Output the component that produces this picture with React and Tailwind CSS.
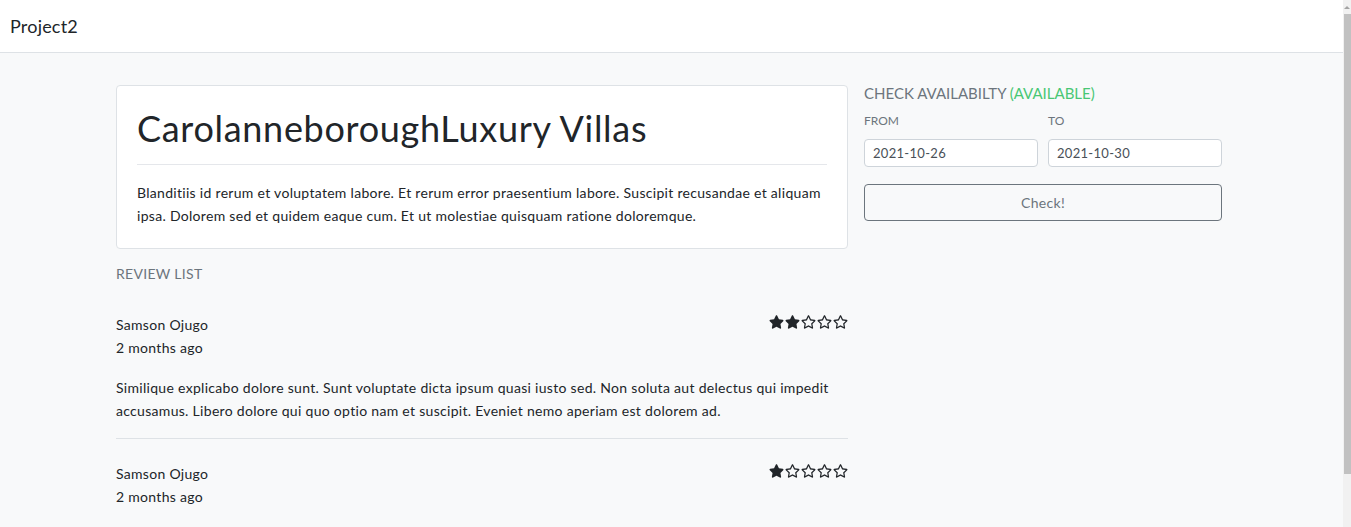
import { useState } from "react";

const reviews = [
  {
    name: "Samson Ojugo",
    time: "2 months ago",
    rating: 2,
    body: "Similique explicabo dolore sunt. Sunt voluptate dicta ipsum quasi iusto sed. Non soluta aut delectus qui impedit accusamus. Libero dolore qui quo optio nam et suscipit. Eveniet nemo aperiam est dolorem ad.",
  },
  {
    name: "Samson Ojugo",
    time: "2 months ago",
    rating: 1,
  },
];

function Star({ filled }) {
  return (
    <svg viewBox="0 0 576 512" className="w-[15px] h-[14px] text-[#212529]" fill="currentColor">
      {filled ? (
        <path d="M259.3 17.8L194 150.2 47.9 171.5c-26.2 3.8-36.7 36.1-17.7 54.6l105.7 103-25 145.5c-4.5 26.3 23.2 46 46.4 33.7L288 439.6l130.7 68.7c23.2 12.2 50.9-7.4 46.4-33.7l-25-145.5 105.7-103c19-18.5 8.5-50.8-17.7-54.6L382 150.2 316.7 17.8c-11.7-23.6-45.6-23.9-57.4 0z" />
      ) : (
        <path d="M528.1 171.5L382 150.2 316.7 17.8c-11.7-23.6-45.6-23.9-57.4 0L194 150.2 47.9 171.5c-26.2 3.8-36.7 36.1-17.7 54.6l105.7 103-25 145.5c-4.5 26.3 23.2 46 46.4 33.7L288 439.6l130.7 68.7c23.2 12.2 50.9-7.4 46.4-33.7l-25-145.5 105.7-103c19-18.5 8.5-50.8-17.7-54.6zM388.6 312.3l23.7 138.4L288 385.4l-124.3 65.3 23.7-138.4-100.6-98 139-20.2 62.2-126 62.2 126 139 20.2-100.6 98z" />
      )}
    </svg>
  );
}

function Review({ review, last }) {
  return (
    <div className={last ? "pt-[23px]" : "pt-[23px] pb-[16px] border-b border-[#dee2e6]"}>
      <div className="flex justify-between">
        <div>
          <div className="text-[14px] leading-[23px] tracking-[0.3px]">{review.name}</div>
          <div className="text-[14px] leading-[23px] tracking-[0.3px]">{review.time}</div>
        </div>
        <div className="flex gap-px mt-[2px]">
          {[1, 2, 3, 4, 5].map((i) => (
            <Star key={i} filled={i <= review.rating} />
          ))}
        </div>
      </div>
      {review.body && (
        <p className="mt-[17px] text-[14px] leading-[23px] tracking-[0.3px]">{review.body}</p>
      )}
    </div>
  );
}

// fake browser scrollbar, the reference page overflows the window
function Scrollbar() {
  return (
    <div className="w-[8px] shrink-0 bg-[#f1f1f1] flex flex-col items-center">
      <div className="h-[14px] flex items-center justify-center">
        <div className="w-0 h-0 border-l-[3px] border-r-[3px] border-b-[3px] border-l-transparent border-r-transparent border-b-[#a3a3a3]" />
      </div>
      <div className="w-[7px] h-[460px] bg-[#c1c1c1]" />
    </div>
  );
}

export default function App() {
  const [from, setFrom] = useState("2021-10-26");
  const [to, setTo] = useState("2021-10-30");

  return (
    <div className="h-screen overflow-hidden flex font-['Lato',sans-serif] text-[#212529]">
      <div className="flex-1 min-w-0 bg-[#f8f9fa]">
        <nav className="h-[53px] bg-white border-b border-[#dee2e6] flex items-center px-[10px]">
          <span className="text-[18px] tracking-[0.2px]">Project2</span>
        </nav>

        <div className="w-[1106px] ml-[116px] pt-[32px] flex gap-[16px]">
          <div className="w-[732px]">
            <div className="bg-white border border-[#dee2e6] rounded-[4px] px-[20px] pt-[18px] pb-[21px]">
              <h1 className="text-[36px] leading-[48px] font-normal tracking-[0.7px]">CarolanneboroughLuxury Villas</h1>
              <hr className="mt-[12px] mb-[16px] border-t border-[#e5e7eb]" />
              <p className="text-[14px] leading-[23px] tracking-[0.3px]">
                Blanditiis id rerum et voluptatem labore. Et rerum error praesentium labore. Suscipit recusandae et aliquam ipsa. Dolorem sed et quidem eaque cum. Et ut molestiae quisquam ratione doloremque.
              </p>
            </div>

            <h2 className="mt-[15px] mb-[6px] text-[14px] leading-[20px] uppercase tracking-[0.3px] text-[#6c757d]">Review list</h2>

            <div>
              {reviews.map((r, i) => (
                <Review key={i} review={r} last={i === reviews.length - 1} />
              ))}
            </div>
          </div>

          <div className="w-[358px]">
            <div className="text-[15px] leading-[20px] uppercase text-[#6c757d] mt-[-2px]">
              Check availabilty <span className="text-[#48c774]">(available)</span>
            </div>
            <div className="mt-[10px] flex gap-[10px]">
              <label className="flex-1">
                <span className="block text-[12px] leading-[16px] uppercase text-[#6c757d]">From</span>
                <input
                  value={from}
                  onChange={(e) => setFrom(e.target.value)}
                  className="mt-[10px] w-full h-[28px] px-[8px] bg-white border border-[#ced4da] rounded-[4px] text-[13px] tracking-[0.3px] text-[#495057] outline-none"
                />
              </label>
              <label className="flex-1">
                <span className="block text-[12px] leading-[16px] uppercase text-[#6c757d]">To</span>
                <input
                  value={to}
                  onChange={(e) => setTo(e.target.value)}
                  className="mt-[10px] w-full h-[28px] px-[8px] bg-white border border-[#ced4da] rounded-[4px] text-[13px] tracking-[0.3px] text-[#495057] outline-none"
                />
              </label>
            </div>
            <button className="mt-[17px] w-full h-[37px] border border-[#6c757d] rounded-[4px] text-[14px] tracking-[0.3px] text-[#6c757d]">
              Check!
            </button>
          </div>
        </div>
      </div>
      <Scrollbar />
    </div>
  );
}
